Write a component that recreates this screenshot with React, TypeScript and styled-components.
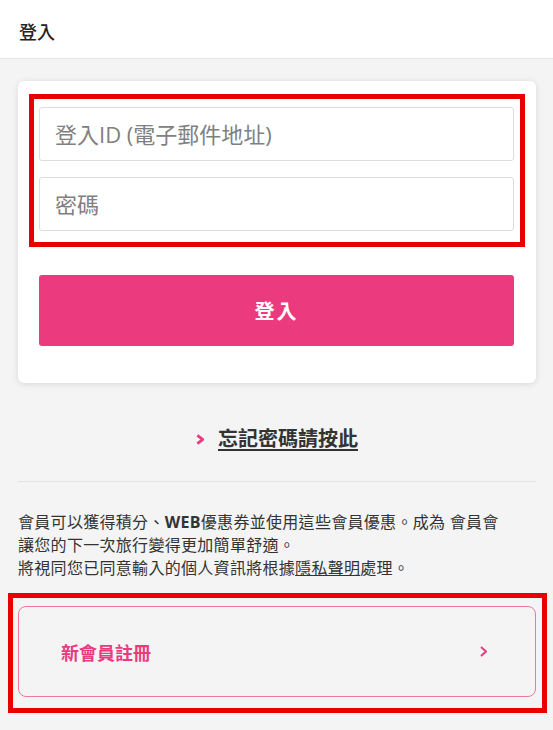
import React from 'react';
import styled, { createGlobalStyle } from 'styled-components';

const pink = '#ec3a7f';

const GlobalStyle = createGlobalStyle`
  body {
    margin: 0;
    background: #f4f4f4;
    font-family: "Open Sans", "Noto Sans CJK TC", sans-serif;
    color: #333;
  }
`;

const Header = styled.header`
  box-sizing: border-box;
  height: 59px;
  background: #fff;
  border-bottom: 1px solid #e6e6e6;
  display: flex;
  align-items: center;
  padding: 3px 19px 0;
`;

const Title = styled.h1`
  margin: 0;
  font-size: 18px;
  font-weight: 500;
  color: #222;
`;

const Main = styled.main`
  padding: 22px 17px 34px 18px;
`;

const Card = styled.section`
  background: #fff;
  border-radius: 6px;
  box-shadow: 0 1px 6px rgba(0, 0, 0, 0.12);
  padding: 26px 22px 37px 21px;
`;

// red annotation frame drawn over the wrapped content
const Highlight = styled.div`
  position: relative;
  &::after {
    content: '';
    position: absolute;
    top: -13px;
    left: -10px;
    right: -11px;
    bottom: -16px;
    border: 5px solid #e80000;
    pointer-events: none;
  }
`;

const Fields = styled.div`
  display: flex;
  flex-direction: column;
  gap: 16px;
`;

const Input = styled.input`
  box-sizing: border-box;
  width: 100%;
  height: 54px;
  border: 1px solid #ddd;
  border-radius: 3px;
  padding: 0 15px;
  font-family: inherit;
  font-size: 22px;
  color: #333;
  outline: none;
  &::placeholder {
    color: #808080;
  }
`;

const SubmitButton = styled.button`
  display: block;
  width: 100%;
  height: 71px;
  margin-top: 44px;
  border: none;
  border-radius: 3px;
  background: ${pink};
  color: #fff;
  font-family: inherit;
  font-size: 20px;
  font-weight: 700;
  letter-spacing: 2px;
`;

const ForgotRow = styled.div`
  display: flex;
  justify-content: center;
  align-items: center;
  gap: 14px;
  padding: 44px 0 30px;
  line-height: 24px;
  border-bottom: 1px solid #e3e3e3;
`;

const ForgotLink = styled.a`
  font-size: 20px;
  font-weight: 700;
  color: #333;
  text-decoration: underline;
  text-decoration-thickness: 2px;
  text-underline-offset: 3px;
`;

const Info = styled.p`
  margin: 29px 0 26px;
  padding-right: 34px;
  font-size: 16px;
  line-height: 23px;
  letter-spacing: 0.3px;
  color: #333;
  b {
    font-weight: 700;
  }
  a {
    color: #333;
    text-decoration: underline;
  }
`;

const RegisterButton = styled.a`
  box-sizing: border-box;
  display: flex;
  align-items: center;
  justify-content: space-between;
  height: 91px;
  padding: 0 48px 0 42px;
  border: 1px solid #ee77a3;
  border-radius: 8px;
  color: ${pink};
  font-size: 18px;
  font-weight: 700;
`;

const Chevron = ({ w, h, weight }: { w: number; h: number; weight: number }) => (
  <svg width={w} height={h} viewBox={`0 0 ${w} ${h}`} fill="none">
    <path
      d={`M${weight / 2} ${weight / 2} L${w - weight / 2} ${h / 2} L${weight / 2} ${h - weight / 2}`}
      stroke={pink}
      strokeWidth={weight}
      strokeLinejoin="miter"
    />
  </svg>
);

export default function App() {
  return (
    <>
      <GlobalStyle />
      <Header>
        <Title>登入</Title>
      </Header>
      <Main>
        <Card>
          <Highlight>
            <Fields>
              <Input placeholder="登入ID (電子郵件地址)" />
              <Input type="password" placeholder="密碼" />
            </Fields>
          </Highlight>
          <SubmitButton>登入</SubmitButton>
        </Card>
        <ForgotRow>
          <Chevron w={8} h={11} weight={2.8} />
          <ForgotLink>忘記密碼請按此</ForgotLink>
        </ForgotRow>
        <Info>
          會員可以獲得積分、<b>WEB</b>優惠券並使用這些會員優惠。成為 會員會讓您的下一次旅行變得更加簡單舒適。
          <br />
          將視同您已同意輸入的個人資訊將根據<a>隱私聲明</a>處理。
        </Info>
        <Highlight>
          <RegisterButton>
            新會員註冊
            <Chevron w={7} h={11} weight={2} />
          </RegisterButton>
        </Highlight>
      </Main>
    </>
  );
}
